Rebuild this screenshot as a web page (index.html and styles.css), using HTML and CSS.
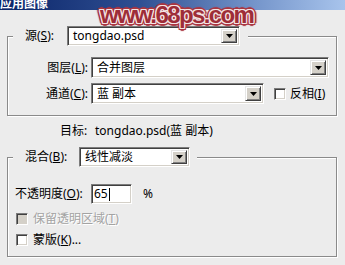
FILE: index.html
```html
<!DOCTYPE html>
<html lang="zh-CN">
<head>
<meta charset="utf-8">
<title>应用图像</title>
<link rel="stylesheet" href="styles.css">
</head>
<body>
<div class="dialog">
  <div class="titlebar"><span class="title">应用图像</span></div>

  <fieldset class="group group-source">
    <legend class="legend">
      <span class="lbl lbl-src">源(<u>S</u>):</span>
      <span class="combo combo-src"><span class="combo-text latin">tongdao.psd</span><span class="combo-btn"><svg width="7" height="4" viewBox="0 0 7 4"><polygon points="0,0 7,0 3.5,4" fill="#000"/></svg></span></span>
    </legend>
    <div class="row row-layer">
      <span class="lbl lbl-col">图层(<u>L</u>):</span>
      <span class="combo combo-layer"><span class="combo-text">合并图层</span><span class="combo-btn"><svg width="7" height="4" viewBox="0 0 7 4"><polygon points="0,0 7,0 3.5,4" fill="#000"/></svg></span></span>
    </div>
    <div class="row row-channel">
      <span class="lbl lbl-col">通道(<u>C</u>):</span>
      <span class="combo combo-channel"><span class="combo-text">蓝 副本</span><span class="combo-btn"><svg width="7" height="4" viewBox="0 0 7 4"><polygon points="0,0 7,0 3.5,4" fill="#000"/></svg></span></span>
      <span class="check check-invert"></span>
      <span class="check-label">反相(<u>I</u>)</span>
    </div>
  </fieldset>

  <div class="target">
    <span class="target-label">目标:</span>
    <span class="target-value">tongdao.psd(蓝 副本)</span>
  </div>

  <fieldset class="group group-blend">
    <legend class="legend legend-blend">
      <span class="lbl lbl-blend">混合(<u>B</u>):</span>
      <span class="combo combo-blend"><span class="combo-text">线性减淡</span><span class="combo-btn"><svg width="7" height="4" viewBox="0 0 7 4"><polygon points="0,0 7,0 3.5,4" fill="#000"/></svg></span></span>
    </legend>
    <div class="row row-opacity">
      <span class="lbl lbl-opacity">不透明度(<u>O</u>):</span>
      <span class="field"><span class="field-text">65</span><span class="caret"></span></span>
      <span class="percent">%</span>
    </div>
    <div class="row row-check row-check-first disabled">
      <span class="check check-disabled"></span>
      <span class="check-label">保留透明区域(<u>T</u>)</span>
    </div>
    <div class="row row-check row-check-second">
      <span class="check"></span>
      <span class="check-label">蒙版(<u>K</u>)...</span>
    </div>
  </fieldset>

  <div class="watermark">www.68ps.com</div>
</div>
</body>
</html>
```

FILE: styles.css
```css
* {
  box-sizing: border-box;
}

html,
body {
  margin: 0;
  padding: 0;
}

body {
  width: 345px;
  height: 265px;
  overflow: hidden;
  background: #ececec;
  font-family: "Noto Sans", "Noto Sans CJK SC", sans-serif;
  font-size: 12px;
  color: #000;
}

u {
  text-decoration: underline;
  text-underline-offset: 1px;
}

.dialog {
  position: relative;
  width: 345px;
  height: 265px;
}

/* title bar */
.titlebar {
  height: 10px;
  overflow: hidden;
  background: linear-gradient(to right, #0a2468 0%, #2f4f92 40%, #7797cc 75%, #a8c4ec 100%);
}

.title {
  display: block;
  margin-top: -4px;
  color: #fff;
  font-family: "Noto Sans CJK SC", sans-serif;
  font-weight: bold;
  font-size: 12px;
  line-height: 14px;
}

/* group boxes */
.group {
  width: 330px;
  min-width: 0;
  margin: 0 0 0 7px;
  padding: 0;
  border: 1px solid #8a8a8a;
  box-shadow: inset 1px 1px 0 #fff, 1px 1px 0 #fff;
}

.group-source {
  margin-top: 16px;
  padding-bottom: 11px;
}

.group-blend {
  margin-top: 9px;
  padding-bottom: 9px;
}

.legend {
  display: flex;
  align-items: center;
  height: 20px;
  margin-left: 5px;
  padding: 0 8px 0 12px;
  background: #ececec;
}

.legend-blend {
  padding-right: 7px;
}

.lbl {
  white-space: nowrap;
  line-height: 16px;
}

.lbl-src {
  width: 42px;
}

.lbl-blend {
  width: 54px;
}

.lbl-col {
  width: 80px;
  margin-right: 3px;
  text-align: right;
}

.lbl-opacity {
  width: 76px;
}

.row {
  display: flex;
  align-items: center;
}

.row-layer {
  margin-top: 11px;
  height: 21px;
}

.row-channel {
  margin-top: 5px;
  height: 21px;
}

/* combo boxes */
.combo {
  display: flex;
  align-items: center;
  height: 20px;
  background: #fff;
  border: 1px solid;
  border-color: #7c7c7c #fff #fff #7c7c7c;
  box-shadow: inset 1px 1px 0 #404040, inset -1px -1px 0 #d4d0c8;
  padding: 0 2px 0 5px;
}

.combo-src {
  width: 173px;
}

.combo-layer {
  width: 238px;
  height: 21px;
}

.combo-channel {
  width: 173px;
  height: 21px;
}

.combo-blend {
  width: 111px;
}

.combo-text {
  line-height: 16px;
  white-space: nowrap;
}

.combo-btn {
  display: flex;
  align-items: center;
  justify-content: center;
  width: 16px;
  height: calc(100% - 4px);
  margin-left: auto;
  background: #d4d0c8;
  border: 1px solid;
  border-color: #e6e6e6 #404040 #404040 #e6e6e6;
  box-shadow: inset 1px 1px 0 #fff, inset -1px -1px 0 #808080;
}

.combo-btn svg {
  display: block;
}

/* checkboxes */
.check {
  flex: none;
  width: 12px;
  height: 12px;
  background: #fff;
  border: 1px solid;
  border-color: #7c7c7c #fff #fff #7c7c7c;
  box-shadow: inset 1px 1px 0 #404040, inset -1px -1px 0 #d4d0c8;
}

.check-invert {
  margin-left: 10px;
}

.check-invert + .check-label {
  margin-left: 4px;
}

.check-disabled {
  background: #d4d0c8;
}

.check-label {
  white-space: nowrap;
  line-height: 14px;
}

/* target line */
.target {
  display: flex;
  height: 14px;
  margin: 8px 0 0 60px;
  line-height: 14px;
  white-space: nowrap;
}

.target-label {
  width: 35px;
}

/* opacity */
.row-opacity {
  height: 20px;
  margin-top: 17px;
  padding-left: 7px;
}

.field {
  display: flex;
  align-items: center;
  width: 41px;
  height: 20px;
  padding-left: 2px;
  background: #fff;
  border: 1px solid;
  border-color: #7c7c7c #fff #fff #7c7c7c;
  box-shadow: inset 1px 1px 0 #404040, inset -1px -1px 0 #d4d0c8;
}

.field-text {
  line-height: 16px;
}

.caret {
  width: 1px;
  height: 13px;
  margin-left: 1px;
  background: #000;
}

.percent {
  margin-left: 11px;
  line-height: 16px;
}

.row-check {
  height: 14px;
  padding-left: 8px;
}

.row-check .check-label {
  margin-left: 5px;
}

.row-check-first {
  margin-top: 8px;
}

.row-check-second {
  margin-top: 7px;
}

.disabled .check-label {
  color: #a3a3a3;
  text-shadow: 1px 1px 0 #fff;
}

/* watermark overlay */
.watermark {
  position: absolute;
  left: 100px;
  top: 3px;
  font-family: "Liberation Sans", Arial, sans-serif;
  font-weight: bold;
  font-size: 24px;
  line-height: 24px;
  letter-spacing: -1.6px;
  white-space: nowrap;
  color: #9e2d38;
  text-shadow:
    1px 0 0 #f4e4e4, -1px 0 0 #f4e4e4, 0 1px 0 #f4e4e4, 0 -1px 0 #f4e4e4,
    1px 1px 0 #f4e4e4, -1px -1px 0 #f4e4e4, 1px -1px 0 #f4e4e4, -1px 1px 0 #f4e4e4,
    2px 0 0 #aa3641, -2px 0 0 #aa3641, 0 2px 0 #aa3641, 0 -2px 0 #aa3641,
    2px 2px 0 #aa3641, -2px -2px 0 #aa3641, 2px -2px 0 #aa3641, -2px 2px 0 #aa3641,
    3px 0 1px #aa3641, -3px 0 1px #aa3641, 0 3px 1px #aa3641, 0 -3px 1px #aa3641;
}
```
